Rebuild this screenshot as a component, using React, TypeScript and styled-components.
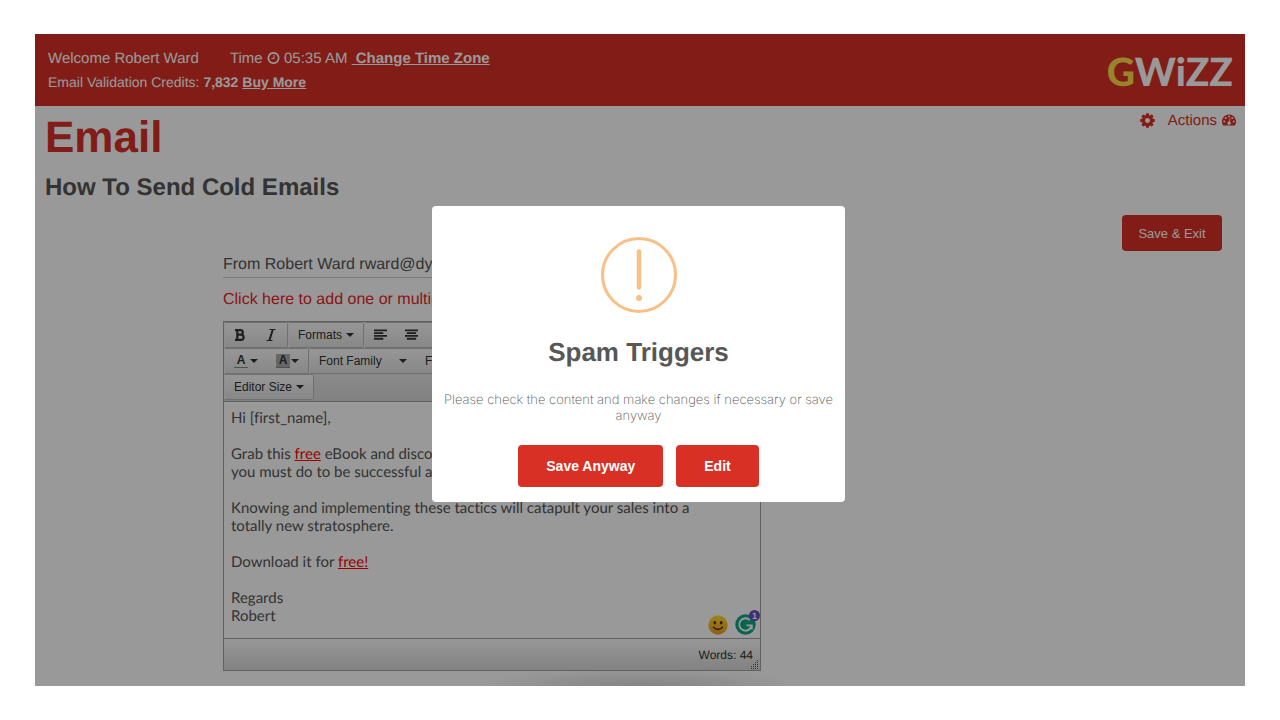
import React from "react";
import styled, { createGlobalStyle, css } from "styled-components";

const RED = "#d93026";
const INK = "#555";

const GlobalStyle = createGlobalStyle`
  *, *::before, *::after { box-sizing: border-box; }
  body {
    margin: 0;
    background: #fff;
    color: ${INK};
    font-family: "Liberation Sans", Arial, sans-serif;
    font-size: 16px;
    text-rendering: geometricPrecision;
  }
  button { font: inherit; color: inherit; cursor: pointer; }
  h1, h2, p { margin: 0; }
`;

const Page = styled.div`
  min-height: 100vh;
  padding: 34px 35px;
  display: flex;
`;

const Screen = styled.div`
  position: relative;
  flex: 1;
  min-width: 0;
  overflow: hidden;
  background: radial-gradient(ellipse 160px 18px at 50% 100%, #dcdcdc, #fff) no-repeat;
`;

const TopBar = styled.header`
  display: flex;
  justify-content: space-between;
  align-items: center;
  height: 72px;
  padding: 0 12px 0 13px;
  background: ${RED};
  color: #fff;
`;

const Account = styled.div`
  display: flex;
  flex-direction: column;
  gap: 4px;
`;

const AccountLine = styled.div<{ $small?: boolean }>`
  display: flex;
  align-items: center;
  height: 20px;
  font-size: ${(p) => (p.$small ? 14 : 15)}px;
  white-space: pre;
`;

const Clock = styled.div`
  display: flex;
  align-items: center;
  margin-left: 31px;
`;

const BarLink = styled.a`
  color: inherit;
  font-weight: 700;
`;

const Logo = styled.div`
  padding-top: 4px;
  font-family: Lato, sans-serif;
  font-weight: 900;
  font-size: 39px;
  line-height: 40px;
  color: #fff;
`;

const LogoAccent = styled.span`
  color: #ffdd4a;
`;

const Heading = styled.div`
  display: flex;
  justify-content: space-between;
  align-items: flex-start;
  padding: 4px 9px 0 10px;
`;

const Title = styled.h1`
  color: ${RED};
  font-size: 44px;
  line-height: 56px;
`;

const Subtitle = styled.h2`
  font-size: 24px;
  line-height: 28px;
  margin-top: 8px;
  color: ${INK};
`;

const Actions = styled.nav`
  display: flex;
  align-items: center;
  gap: 13px;
  height: 20px;
  color: ${RED};
  font-size: 15px;
`;

const ActionLink = styled.a`
  display: flex;
  align-items: center;
  gap: 5px;
  color: inherit;
  text-decoration: none;
`;

const Workspace = styled.main`
  display: grid;
  grid-template-columns: 188px minmax(0, 538px) 1fr;
  padding: 13px 23px 15px 0;
`;

const Form = styled.div`
  grid-column: 2;
  padding-top: 38px;
`;

const Side = styled.div`
  display: flex;
  justify-content: flex-end;
  align-items: flex-start;
`;

const SaveExit = styled.button`
  height: 36px;
  width: 100px;
  border: 0;
  border-radius: 4px;
  background: ${RED};
  color: #fff;
  font-size: 13px;
`;

const From = styled.div`
  height: 25px;
  line-height: 24px;
  border-bottom: 1px solid #ccc;
  white-space: nowrap;
`;

const AddLink = styled.a`
  display: block;
  margin: 12px 0 11px;
  line-height: 20px;
  color: #e8261e;
  text-decoration: none;
`;

const Editor = styled.div`
  position: relative;
  border: 1px solid #a0a0a0;
`;

const barFill = css`
  background: linear-gradient(#fcfcfc, #d9d9d9);
`;

const Toolbar = styled.div`
  ${barFill}
  border-bottom: 1px solid #a0a0a0;
  padding-bottom: 1px;
`;

const ToolRow = styled.div`
  display: flex;
  height: 26px;
`;

const ToolGroup = styled.div`
  background: linear-gradient(#fcfcfc, #e2e2e2);
  display: flex;
  border: 1px solid #bbb;
  border-left-color: #eee;
  border-radius: 2px;
`;

const Tool = styled.button<{ $width: number }>`
  display: flex;
  align-items: center;
  justify-content: space-between;
  width: ${(p) => p.$width}px;
  padding: 0 9px;
  border: 0;
  background: none;
  color: #333;
  font-size: 12px;
  white-space: nowrap;
`;

const Caret = styled.span`
  border: 4px solid transparent;
  border-top-color: #333;
  border-bottom: 0;
`;

const Swatch = styled.span<{ $filled?: boolean }>`
  width: 14px;
  height: 14px;
  line-height: 13px;
  font-weight: 700;
  border-bottom: 1px solid #888;
  background: ${(p) => (p.$filled ? "#aaa" : "none")};
`;

const Message = styled.div`
  padding: 7px 7px 0;
  height: 236px;
  font-family: Lato, sans-serif;
  font-size: 15px;
  line-height: 18px;
  font-variant-ligatures: none;
`;

const Paragraph = styled.p`
  margin-bottom: 18px;
`;

const Trigger = styled.span`
  color: #f00;
  text-decoration: underline;
`;

const Assistants = styled.div`
  position: absolute;
  right: 0;
  bottom: 35px;
  display: flex;
  align-items: flex-end;
  gap: 7px;
`;

const Status = styled.div`
  ${barFill}
  height: 32px;
  border-top: 1px solid #a0a0a0;
  padding: 0 7px;
  line-height: 32px;
  text-align: right;
  font-size: 12px;
  color: #333;
`;

const Grip = styled.svg`
  position: absolute;
  right: 1px;
  bottom: 1px;
`;

const Overlay = styled.div`
  position: absolute;
  inset: 0;
  display: flex;
  align-items: center;
  justify-content: center;
  padding: 0 3px 13px 0;
  background: rgba(0, 0, 0, 0.4);
`;

const Dialog = styled.section`
  width: 413px;
  padding: 30px 10px 15px;
  border-radius: 4px;
  background: #fff;
  text-align: center;
`;

const WarningIcon = styled.svg`
  display: block;
  margin: 0 auto;
`;

const DialogTitle = styled.h2`
  margin-top: 22px;
  font-size: 26px;
  line-height: 32px;
  color: #575757;
`;

const DialogText = styled.p`
  margin-top: 24px;
  font-family: Inter, sans-serif;
  font-weight: 200;
  font-size: 13px;
  line-height: 16px;
  color: #555;
`;

const DialogButtons = styled.div`
  display: flex;
  justify-content: center;
  gap: 13px;
  margin-top: 21px;
`;

const DialogButton = styled.button`
  height: 42px;
  padding: 0 28px;
  border: 0;
  border-radius: 4px;
  background: ${RED};
  color: #fff;
  font-size: 14px;
  font-weight: 700;
`;

const ClockIcon = () => (
  <svg width="13" height="14" viewBox="0 0 1536 1792" fill="currentColor" aria-hidden="true">
    <path d="M896 544v448q0 14-9 23t-23 9h-320q-14 0-23-9t-9-23v-64q0-14 9-23t23-9h224v-352q0-14 9-23t23-9h64q14 0 23 9t9 23zm416 352q0-148-73-273t-198-198-273-73-273 73-198 198-73 273 73 273 198 198 273 73 273-73 198-198 73-273zm224 0q0 209-103 385.5t-279.5 279.5-385.5 103-385.5-103-279.5-279.5-103-385.5 103-385.5 279.5-279.5 385.5-103 385.5 103 279.5 279.5 103 385.5z" />
  </svg>
);

const GearIcon = () => (
  <svg width="15" height="17" viewBox="0 0 1536 1792" fill="currentColor" aria-hidden="true">
    <path d="M1024 896q0-106-75-181t-181-75-181 75-75 181 75 181 181 75 181-75 75-181zm512-109v222q0 12-8 23t-20 13l-185 28q-19 54-39 91 35 50 107 138 10 12 10 25t-9 23q-27 37-99 108t-94 71q-12 0-26-9l-138-108q-44 23-91 38-16 136-29 186-7 28-36 28h-222q-14 0-24.5-8.5t-11.5-21.5l-28-184q-49-16-90-37l-141 107q-10 9-25 9-14 0-25-11-126-114-165-168-7-10-7-23 0-12 8-23 15-21 51-66.5t54-70.5q-27-50-41-99l-183-27q-13-2-21-12.5t-8-23.5v-222q0-12 8-23t19-13l186-28q14-46 39-92-40-57-107-138-10-12-10-24 0-10 9-23 26-36 98.5-107.5t94.5-71.5q13 0 26 10l138 107q44-23 91-38 16-136 29-186 7-28 36-28h222q14 0 24.5 8.5t11.5 21.5l28 184q49 16 90 37l142-107q9-9 24-9 13 0 25 10 129 119 165 170 7 8 7 22 0 12-8 23-15 21-51 66.5t-54 70.5q26 50 41 98l183 28q13 2 21 12.5t8 23.5z" />
  </svg>
);

const GaugeIcon = () => (
  <svg width="14" height="12" viewBox="0 0 28 24" aria-hidden="true">
    <path d="M14 1a14 14 0 0 1 11.800 21.500q-.4.500-1 .5H3.200q-.6 0-1-.5A14 14 0 0 1 14 1z" fill="currentColor" />
    <g fill="#fff">
      <circle cx="4.500" cy="15" r="2" />
      <circle cx="7.500" cy="8" r="2" />
      <circle cx="14" cy="5.200" r="2" />
      <circle cx="20.500" cy="8" r="2" />
      <circle cx="23.500" cy="15" r="2" />
      <path d="M15.400 8.500l1.600.4-1.300 6.500a3.200 3.200 0 1 1-1.800-.4z" />
    </g>
  </svg>
);

const AlignIcon = ({ centered }: { centered?: boolean }) => (
  <svg width="14" height="12" viewBox="0 0 14 12" fill="#333" aria-hidden="true">
    <path
      d={
        centered
          ? "M0 0h14v2H0zM2 3h10v2H2zM0 6h14v2H0zM2 9h10v2H2z"
          : "M0 0h14v2H0zM0 3h10v2H0zM0 6h14v2H0zM0 9h10v2H0z"
      }
    />
  </svg>
);

const ItalicIcon = () => (
  <svg width="10" height="12" viewBox="0 0 10 12" fill="none" stroke="#333" aria-hidden="true">
    <path d="M3.500 .5h6M.5 11.500h6" />
    <path d="M6.800 .5l-3.400 11" strokeWidth="2" />
  </svg>
);

const SmileIcon = () => (
  <svg width="20" height="20" viewBox="0 0 20 20" aria-hidden="true">
    <defs>
      <linearGradient id="face" x1="0" y1="0" x2="0" y2="1">
        <stop offset="0" stopColor="#ffe02e" />
        <stop offset="1" stopColor="#f79a1c" />
      </linearGradient>
    </defs>
    <circle cx="10" cy="10" r="9.700" fill="url(#face)" />
    <ellipse cx="6.800" cy="7.800" rx="1.300" ry="1.800" fill="#402a10" />
    <ellipse cx="13.200" cy="7.800" rx="1.300" ry="1.800" fill="#402a10" />
    <path d="M5.500 12.300q4.500 4.200 9 0" fill="none" stroke="#402a10" strokeWidth="1.400" strokeLinecap="round" />
  </svg>
);

const GrammarIcon = () => (
  <svg width="25" height="25" viewBox="0 0 25 25" aria-hidden="true">
    <circle cx="10.500" cy="14.500" r="10.200" fill="#11a683" />
    <g fill="none" stroke="#fff" strokeWidth="1.800">
      <path d="M15 10.200A6.200 6.200 0 1 0 16.600 15.500" />
      <path d="M11.500 15.300h5.300v4.200" />
    </g>
    <circle cx="19.500" cy="5.500" r="5.500" fill="#6c4bc4" />
    <text x="19.500" y="9" textAnchor="middle" fontSize="9" fontWeight="700" fill="#fff">
      1
    </text>
  </svg>
);

export default function App() {
  return (
    <Page>
      <GlobalStyle />
      <Screen>
        <TopBar>
          <Account>
            <AccountLine>
              Welcome Robert Ward
              <Clock>
                Time <ClockIcon /> 05:35 AM <BarLink href="#timezone"> Change Time Zone</BarLink>
              </Clock>
            </AccountLine>
            <AccountLine $small>
              <span>
                Email Validation Credits: <b>7,832</b> <BarLink href="#credits">Buy More</BarLink>
              </span>
            </AccountLine>
          </Account>
          <Logo>
            <LogoAccent>G</LogoAccent>WiZZ
          </Logo>
        </TopBar>

        <Heading>
          <div>
            <Title>Email</Title>
            <Subtitle>How To Send Cold Emails</Subtitle>
          </div>
          <Actions>
            <ActionLink href="#settings" aria-label="Settings">
              <GearIcon />
            </ActionLink>
            <ActionLink href="#actions">
              Actions <GaugeIcon />
            </ActionLink>
          </Actions>
        </Heading>

        <Workspace>
          <Form>
            <From>From Robert Ward rward@dyn</From>
            <AddLink href="#recipients">Click here to add one or multiple</AddLink>
            <Editor>
              <Toolbar>
                <ToolRow>
                  <ToolGroup>
                    <Tool $width={32} aria-label="Bold">
                      <svg width="12" height="12" viewBox="0 0 12 12" fill="none" stroke="#333" strokeWidth="2.200" aria-hidden="true">
                        <path d="M1 1.100h5.500a2.200 2.200 0 0 1 0 4.600H3M3 5.700h4a2.600 2.600 0 0 1 0 5.200H1M3.300 1v10" />
                      </svg>
                    </Tool>
                    <Tool $width={30} aria-label="Italic">
                      <ItalicIcon />
                    </Tool>
                  </ToolGroup>
                  <ToolGroup>
                    <Tool $width={74}>
                      Formats <Caret />
                    </Tool>
                  </ToolGroup>
                  <ToolGroup>
                    <Tool $width={31} aria-label="Align left">
                      <AlignIcon />
                    </Tool>
                    <Tool $width={31} aria-label="Align center">
                      <AlignIcon centered />
                    </Tool>
                    <Tool $width={31} aria-label="Justify">
                      <AlignIcon />
                    </Tool>
                  </ToolGroup>
                </ToolRow>
                <ToolRow>
                  <ToolGroup>
                    <Tool $width={42} aria-label="Text color">
                      <Swatch>A</Swatch> <Caret />
                    </Tool>
                    <Tool $width={41} aria-label="Background color">
                      <Swatch $filled>A</Swatch> <Caret />
                    </Tool>
                  </ToolGroup>
                  <ToolGroup>
                    <Tool $width={106}>
                      Font Family <Caret />
                    </Tool>
                    <Tool $width={106}>
                      Font Sizes <Caret />
                    </Tool>
                  </ToolGroup>
                </ToolRow>
                <ToolRow>
                  <ToolGroup>
                    <Tool $width={88}>
                      Editor Size <Caret />
                    </Tool>
                  </ToolGroup>
                </ToolRow>
              </Toolbar>
              <Message>
                <Paragraph>Hi [first_name],</Paragraph>
                <Paragraph>
                  Grab this <Trigger>free</Trigger> eBook and discover what
                  <br />
                  you must do to be successful at sales.
                </Paragraph>
                <Paragraph>
                  Knowing and implementing these tactics will catapult your sales into a
                  <br />
                  totally new stratosphere.
                </Paragraph>
                <Paragraph>
                  Download it for <Trigger>free!</Trigger>
                </Paragraph>
                <Paragraph>
                  Regards
                  <br />
                  Robert
                </Paragraph>
              </Message>
              <Assistants>
                <SmileIcon />
                <GrammarIcon />
              </Assistants>
              <Status>Words: 44</Status>
              <Grip width="9" height="9" viewBox="0 0 9 9" fill="#555" aria-hidden="true">
                <path d="M7 0h1v1H7zM5 2h1v1H5zM7 2h1v1H7zM3 4h1v1H3zM5 4h1v1H5zM7 4h1v1H7zM1 6h1v1H1zM3 6h1v1H3zM5 6h1v1H5zM7 6h1v1H7zM1 8h1v1H1zM3 8h1v1H3zM5 8h1v1H5zM7 8h1v1H7z" />
              </Grip>
            </Editor>
          </Form>
          <Side>
            <SaveExit>Save &amp; Exit</SaveExit>
          </Side>
        </Workspace>

        <Overlay>
          <Dialog role="dialog" aria-modal="true" aria-labelledby="dialog-title">
            <WarningIcon width="78" height="78" viewBox="0 0 78 78" aria-hidden="true">
              <circle cx="39" cy="39" r="36.500" fill="none" stroke="#f8c086" strokeWidth="3" />
              <path d="M39 15.500v36" stroke="#f8c086" strokeWidth="4.500" strokeLinecap="round" />
              <circle cx="39" cy="62" r="3" fill="#f8c086" />
            </WarningIcon>
            <DialogTitle id="dialog-title">Spam Triggers</DialogTitle>
            <DialogText>
              Please check the content and make changes if necessary or save
              <br />
              anyway
            </DialogText>
            <DialogButtons>
              <DialogButton>Save Anyway</DialogButton>
              <DialogButton>Edit</DialogButton>
            </DialogButtons>
          </Dialog>
        </Overlay>
      </Screen>
    </Page>
  );
}
